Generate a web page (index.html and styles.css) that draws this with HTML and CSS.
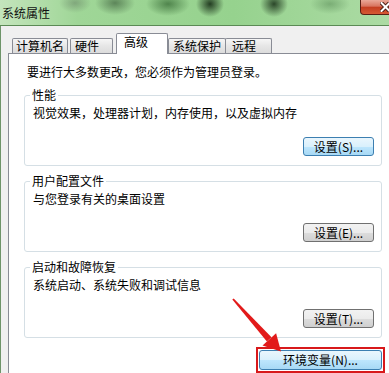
FILE: index.html
```html
<!DOCTYPE html>
<html lang="zh-CN">

<head>
    <meta charset="UTF-8">
    <title>系统属性</title>
    <link rel="stylesheet" href="styles.css">
</head>

<body>
    <div class="window">
        <div class="titlebar">
            <span class="title">系统属性</span>
            <span class="close">
                <svg width="11" height="10" viewBox="0 0 11 10">
                    <path d="M1.5 1 L9.5 9 M9.5 1 L1.5 9" stroke="#4a1d14" stroke-width="4" stroke-linecap="square" />
                    <path d="M1.5 1 L9.5 9 M9.5 1 L1.5 9" stroke="#fff" stroke-width="2" stroke-linecap="square" />
                </svg>
            </span>
        </div>

        <div class="frame">
            <div class="tabs">
                <div class="tab t1">计算机名</div>
                <div class="tab t2">硬件</div>
                <div class="tab t3 active">高级</div>
                <div class="tab t4">系统保护</div>
                <div class="tab t5">远程</div>
            </div>

            <div class="panel">
                <p class="note">要进行大多数更改，您必须作为管理员登录。</p>

                <fieldset class="group">
                    <legend>性能</legend>
                    <p class="desc">视觉效果，处理器计划，内存使用，以及虚拟内存</p>
                    <div class="actions">
                        <button class="btn hot">设置(S)...</button>
                    </div>
                </fieldset>

                <fieldset class="group">
                    <legend>用户配置文件</legend>
                    <p class="desc">与您登录有关的桌面设置</p>
                    <div class="actions">
                        <button class="btn">设置(E)...</button>
                    </div>
                </fieldset>

                <fieldset class="group">
                    <legend>启动和故障恢复</legend>
                    <p class="desc">系统启动、系统失败和调试信息</p>
                    <div class="actions">
                        <button class="btn">设置(T)...</button>
                    </div>
                </fieldset>

                <div class="env-row">
                    <span class="mark">
                        <button class="btn hot env">环境变量(N)...</button>
                    </span>
                </div>
            </div>
        </div>

        <!-- 标注箭头 -->
        <svg class="arrow" width="389" height="373" viewBox="0 0 389 373">
            <polygon points="232.3,299.5 233.7,298.5 271.5,337.2 266.9,341.4" fill="#e21a1a" />
            <polygon points="262.5,345.5 276.1,333.2 281,351.5" fill="#e21a1a" />
        </svg>
    </div>
</body>

</html>
```

FILE: styles.css
```css
html,
body {
    margin: 0;
    padding: 0;
    background: #f0f0f0;
}

body {
    font-family: "Noto Sans CJK SC", "DejaVu Sans", sans-serif;
    font-size: 12px;
    color: #000;
}

.window {
    position: relative;
    width: 389px;
    height: 373px;
    overflow: hidden;
    display: flex;
    flex-flow: column;
}

.titlebar {
    height: 25px;
    flex-shrink: 0;
    display: flex;
    justify-content: space-between;
    align-items: flex-start;
    border-bottom: 1px solid #5b8a55;
    background:
        radial-gradient(ellipse 16px 10px at 75px 3px, rgba(90, 110, 90, 0.45), transparent),
        radial-gradient(ellipse 20px 12px at 115px 3px, rgba(50, 80, 50, 0.6), transparent),
        radial-gradient(ellipse 22px 12px at 168px 4px, rgba(30, 80, 30, 0.6), transparent),
        radial-gradient(ellipse 14px 13px at 210px 4px, rgba(15, 35, 15, 0.85), transparent),
        radial-gradient(ellipse 14px 13px at 274px 4px, rgba(15, 35, 15, 0.8), transparent),
        radial-gradient(ellipse 20px 10px at 330px 4px, rgba(60, 110, 60, 0.4), transparent),
        linear-gradient(90deg, #c4e5bc 0%, #9fd697 20%, #96d28e 60%, #acdba4 100%);
}

.title {
    padding: 5px 0 0 2px;
    line-height: 16px;
    color: #111;
}

.close {
    width: 43px;
    height: 15px;
    box-sizing: border-box;
    margin-right: -14px;
    padding: 2px 0 0 19px;
    border: 1px solid #5a1f14;
    border-top: none;
    border-radius: 0 0 4px 4px;
    background: linear-gradient(#eaa898, #d8735e 45%, #c43d20 50%, #d55a34);
}

.close svg {
    display: block;
}

.frame {
    flex: 1;
    display: flex;
    flex-flow: column;
    padding: 7px 0 0 7px;
    border-left: 1px solid #6e9469;
}

.tabs {
    display: flex;
    align-items: flex-end;
    height: 21px;
    padding-left: 4px;
    margin-bottom: -1px;
    position: relative;
    z-index: 1;
}

.tab {
    box-sizing: border-box;
    height: 15px;
    margin-bottom: 1px;
    padding: 0 0 0 4px;
    line-height: 14px;
    border: 1px solid #898c95;
    border-bottom: none;
    border-radius: 2px 2px 0 0;
    background: linear-gradient(#f6f6f6, #e6e6e6 50%, #dcdcdc);
    white-space: nowrap;
}

.t1 {
    width: 56px;
    padding-left: 3px;
}

.t2 {
    width: 43px;
    margin-left: 2px;
}

.t3 {
    width: 52px;
    margin-left: 3px;
}

.t4 {
    width: 58px;
    margin-left: 0;
}

.t5 {
    width: 47px;
    margin-left: -1px;
    padding-left: 6px;
}

.tab.active {
    height: 21px;
    margin-bottom: 0;
    padding: 1px 0 0 7px;
    background: #fff;
}

.panel {
    flex: 1;
    background: #fff;
    border-top: 1px solid #898c95;
    border-left: 1px solid #898c95;
    padding: 10px 7px 0 15px;
}

.note {
    margin: 0 0 8px 3px;
    line-height: 16px;
}

.group {
    margin: 0;
    padding: 3px 7px 9px 8px;
    border: 1px solid #d5dfe5;
    border-radius: 3px;
}

.group+.group {
    margin-top: 8px;
}

.group legend {
    padding: 0 2px;
    margin-left: -3px;
    line-height: 14px;
}

.desc {
    margin: 0;
    line-height: 16px;
}

.actions {
    display: flex;
    justify-content: flex-end;
    margin-top: 16px;
}

.btn {
    box-sizing: border-box;
    width: 71px;
    height: 19px;
    padding: 0;
    font-family: inherit;
    font-size: 12px;
    line-height: 17px;
    color: #000;
    border: 1px solid #707070;
    border-radius: 3px;
    background: linear-gradient(#f2f2f2, #ebebeb 50%, #dddddd 50%, #cfcfcf);
}

.btn.hot {
    border-color: #3c7fb1;
    background: linear-gradient(#eaf6fd, #d9f0fc 50%, #bee6fd 50%, #a7d9f5);
}

.env-row {
    display: flex;
    justify-content: flex-end;
    margin: 9px -3px 0 0;
}

.mark {
    display: flex;
    padding: 1px;
    border: 2px solid #d8191b;
}

.btn.env {
    width: 123px;
    height: 20px;
    line-height: 18px;
}

.arrow {
    position: absolute;
    left: 0;
    top: 0;
    pointer-events: none;
}
```
